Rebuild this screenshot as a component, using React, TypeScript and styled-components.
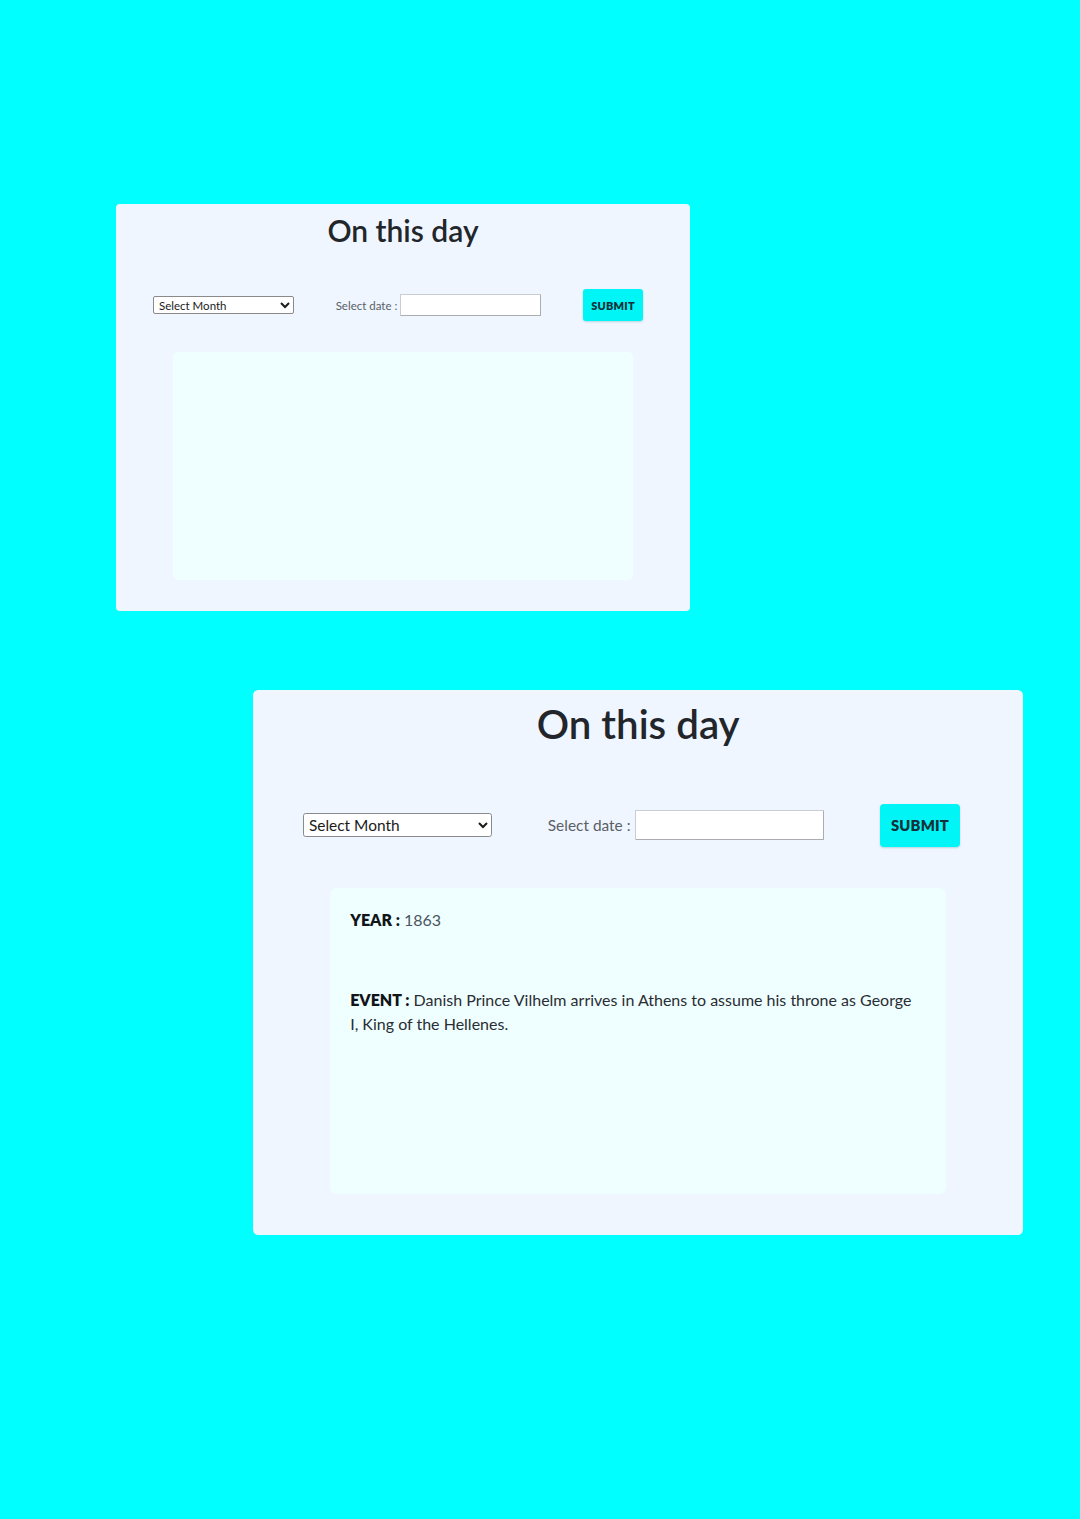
import React from "react";
import styled, { createGlobalStyle } from "styled-components";

const GlobalStyle = createGlobalStyle`
  html, body {
    margin: 0;
    padding: 0;
    background: #00ffff;
  }
  body {
    font-family: Lato, "Noto Sans", sans-serif;
  }
`;

type S = { $s: number };
const px = (n: number) => (p: S) => `${(n * p.$s).toFixed(2)}px`;

const Page = styled.div`
  min-height: 1519px;
  box-sizing: border-box;
  padding-top: 204px;
  display: flex;
  flex-direction: column;
  align-items: flex-start;
`;

const Card = styled.section<S & { $left: number; $top: number }>`
  box-sizing: border-box;
  width: ${px(574)};
  margin-left: ${(p) => p.$left}px;
  margin-top: ${(p) => p.$top}px;
  padding: ${px(8)} 0 ${px(30.5)};
  background: #eff6ff;
  border-radius: ${px(4)};
  display: flex;
  flex-direction: column;
  align-items: center;
`;

const Title = styled.h1<S>`
  margin: 0;
  font-family: Lato, "Noto Sans", sans-serif;
  font-weight: 600;
  font-size: ${px(30)};
  line-height: ${px(36)};
  color: #22262b;
`;

const Controls = styled.div<S>`
  box-sizing: border-box;
  width: 100%;
  height: ${px(32)};
  margin-top: ${px(41)};
  padding: 0 ${px(47)} 0 ${px(37)};
  display: flex;
  align-items: center;
  justify-content: space-between;
`;

const MonthSelect = styled.select<S>`
  box-sizing: border-box;
  width: ${px(141)};
  height: ${px(18)};
  padding: 0 0 0 ${px(1)};
  font-family: Lato, "Noto Sans", sans-serif;
  font-size: ${px(11.5)};
  color: #1a1a1a;
  background: #ffffff;
  border: 1px solid #8a8a8a;
  border-radius: ${px(2)};
`;

const DateGroup = styled.div<S>`
  display: flex;
  align-items: center;
  gap: ${px(3)};
`;

const DateLabel = styled.label<S>`
  font-family: Lato, "Noto Sans", sans-serif;
  font-size: ${px(11.5)};
  color: #5a5f66;
`;

const DateInput = styled.input<S>`
  box-sizing: border-box;
  width: ${px(141)};
  height: ${px(22)};
  padding: 0;
  background: #ffffff;
  border: 1px solid #c9ccd0;
  border-right-color: #a9acb0;
  border-bottom-color: #a9acb0;
  border-radius: ${px(1)};
`;

const SubmitButton = styled.button<S>`
  box-sizing: border-box;
  width: ${px(60)};
  height: ${px(32)};
  padding: 0;
  border: none;
  border-radius: ${px(3)};
  background: #00f6f6;
  box-shadow: 0 1px 2px rgba(0, 120, 140, 0.25);
  font-family: Lato, "Noto Sans", sans-serif;
  font-weight: 800;
  font-size: ${px(11)};
  color: #15303a;
  letter-spacing: 0.2px;
`;

const Result = styled.div<S>`
  box-sizing: border-box;
  width: 80%;
  height: ${px(228)};
  margin-top: ${px(31)};
  padding: ${px(15)} ${px(22)} ${px(15)} ${px(15)};
  background: #efffff;
  border-radius: ${px(5)};
`;

const Line = styled.p<{ $gap?: number }>`
  margin: ${(p) => p.$gap ?? 0}px 0 0;
  font-family: Lato, "Noto Sans", sans-serif;
  font-size: 16px;
  line-height: 24px;
  color: #2a2d33;
`;

const Key = styled.b`
  font-weight: 800;
  color: #111418;
`;

const Value = styled.span<{ $muted?: boolean }>`
  color: ${(p) => (p.$muted ? "#4a5560" : "#2a2d33")};
`;

type DayCardProps = {
  s: number;
  left: number;
  top: number;
  children?: React.ReactNode;
};

function DayCard({ s, left, top, children }: DayCardProps) {
  return (
    <Card $s={s} $left={left} $top={top}>
      <Title $s={s}>On this day</Title>
      <Controls $s={s}>
        <MonthSelect $s={s} defaultValue="">
          <option value="">Select Month</option>
          <option>January</option>
          <option>February</option>
          <option>March</option>
          <option>April</option>
          <option>May</option>
          <option>June</option>
          <option>July</option>
          <option>August</option>
          <option>September</option>
          <option>October</option>
          <option>November</option>
          <option>December</option>
        </MonthSelect>
        <DateGroup $s={s}>
          <DateLabel $s={s}>Select date :</DateLabel>
          <DateInput $s={s} type="text" />
        </DateGroup>
        <SubmitButton $s={s}>SUBMIT</SubmitButton>
      </Controls>
      <Result $s={s}>{children}</Result>
    </Card>
  );
}

export default function App() {
  return (
    <>
      <GlobalStyle />
      <Page>
        <DayCard s={1} left={116} top={0} />
        <DayCard s={1.342} left={253} top={79}>
          <Line>
            <Key>YEAR :</Key> <Value $muted>1863</Value>
          </Line>
          <Line $gap={56}>
            <Key>EVENT :</Key>{" "}
            <Value>
              Danish Prince Vilhelm arrives in Athens to assume his throne as
              George I, King of the Hellenes.
            </Value>
          </Line>
        </DayCard>
      </Page>
    </>
  );
}
